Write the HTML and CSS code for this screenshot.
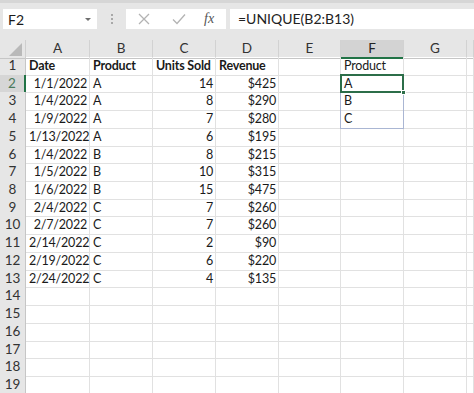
FILE: index.html
```html
<!DOCTYPE html>
<html>
<head>
<meta charset="utf-8">
<link rel="stylesheet" href="styles.css">
</head>
<body>
<div class="app">
  <div class="topstrip"></div>
  <div class="fbar">
    <div class="namebox"><span class="nb-text">F2</span><span class="nb-arrow"></span></div>
    <div class="grip"><i></i><i></i><i></i></div>
    <div class="fbtns">
      <svg class="ic-x" width="12" height="12" viewBox="0 0 12 12"><path d="M1 1L11 11M11 1L1 11" stroke="#b3b3b3" stroke-width="1.3" fill="none"/></svg>
      <svg class="ic-ok" width="14" height="12" viewBox="0 0 14 12"><path d="M1 6.5L5 10.5L13 1.5" stroke="#b3b3b3" stroke-width="1.3" fill="none"/></svg>
      <span class="fx">fx</span>
    </div>
    <div class="finput">=UNIQUE(B2:B13)</div>
  </div>
  <div class="gap"></div>
  <div class="sheet">
    <div class="row hdr">
      <div class="corner"><span class="tri"></span></div>
      <div class="ch">A</div><div class="ch">B</div><div class="ch">C</div><div class="ch">D</div><div class="ch">E</div><div class="ch sel">F</div><div class="ch">G</div><div class="ch last"></div>
    </div>
    <div class="row"><div class="rh">1</div><div class="c b">Date</div><div class="c b">Product</div><div class="c b">Units Sold</div><div class="c b">Revenue</div><div class="c"></div><div class="c">Product</div><div class="c"></div><div class="c"></div></div>
    <div class="row"><div class="rh rsel">2</div><div class="c r">1/1/2022</div><div class="c">A</div><div class="c r">14</div><div class="c r">$425</div><div class="c"></div><div class="c active">A<span class="spill"></span><span class="selbox"><span class="handle"></span></span></div><div class="c"></div><div class="c"></div></div>
    <div class="row"><div class="rh">3</div><div class="c r">1/4/2022</div><div class="c">A</div><div class="c r">8</div><div class="c r">$290</div><div class="c"></div><div class="c">B</div><div class="c"></div><div class="c"></div></div>
    <div class="row"><div class="rh">4</div><div class="c r">1/9/2022</div><div class="c">A</div><div class="c r">7</div><div class="c r">$280</div><div class="c"></div><div class="c">C</div><div class="c"></div><div class="c"></div></div>
    <div class="row"><div class="rh">5</div><div class="c r">1/13/2022</div><div class="c">A</div><div class="c r">6</div><div class="c r">$195</div><div class="c"></div><div class="c"></div><div class="c"></div><div class="c"></div></div>
    <div class="row"><div class="rh">6</div><div class="c r">1/4/2022</div><div class="c">B</div><div class="c r">8</div><div class="c r">$215</div><div class="c"></div><div class="c"></div><div class="c"></div><div class="c"></div></div>
    <div class="row"><div class="rh">7</div><div class="c r">1/5/2022</div><div class="c">B</div><div class="c r">10</div><div class="c r">$315</div><div class="c"></div><div class="c"></div><div class="c"></div><div class="c"></div></div>
    <div class="row"><div class="rh">8</div><div class="c r">1/6/2022</div><div class="c">B</div><div class="c r">15</div><div class="c r">$475</div><div class="c"></div><div class="c"></div><div class="c"></div><div class="c"></div></div>
    <div class="row"><div class="rh">9</div><div class="c r">2/4/2022</div><div class="c">C</div><div class="c r">7</div><div class="c r">$260</div><div class="c"></div><div class="c"></div><div class="c"></div><div class="c"></div></div>
    <div class="row"><div class="rh">10</div><div class="c r">2/7/2022</div><div class="c">C</div><div class="c r">7</div><div class="c r">$260</div><div class="c"></div><div class="c"></div><div class="c"></div><div class="c"></div></div>
    <div class="row"><div class="rh">11</div><div class="c r">2/14/2022</div><div class="c">C</div><div class="c r">2</div><div class="c r">$90</div><div class="c"></div><div class="c"></div><div class="c"></div><div class="c"></div></div>
    <div class="row"><div class="rh">12</div><div class="c r">2/19/2022</div><div class="c">C</div><div class="c r">6</div><div class="c r">$220</div><div class="c"></div><div class="c"></div><div class="c"></div><div class="c"></div></div>
    <div class="row"><div class="rh">13</div><div class="c r">2/24/2022</div><div class="c">C</div><div class="c r">4</div><div class="c r">$135</div><div class="c"></div><div class="c"></div><div class="c"></div><div class="c"></div></div>
    <div class="row"><div class="rh">14</div><div class="c"></div><div class="c"></div><div class="c"></div><div class="c"></div><div class="c"></div><div class="c"></div><div class="c"></div><div class="c"></div></div>
    <div class="row"><div class="rh">15</div><div class="c"></div><div class="c"></div><div class="c"></div><div class="c"></div><div class="c"></div><div class="c"></div><div class="c"></div><div class="c"></div></div>
    <div class="row"><div class="rh">16</div><div class="c"></div><div class="c"></div><div class="c"></div><div class="c"></div><div class="c"></div><div class="c"></div><div class="c"></div><div class="c"></div></div>
    <div class="row"><div class="rh">17</div><div class="c"></div><div class="c"></div><div class="c"></div><div class="c"></div><div class="c"></div><div class="c"></div><div class="c"></div><div class="c"></div></div>
    <div class="row"><div class="rh">18</div><div class="c"></div><div class="c"></div><div class="c"></div><div class="c"></div><div class="c"></div><div class="c"></div><div class="c"></div><div class="c"></div></div>
    <div class="row"><div class="rh">19</div><div class="c"></div><div class="c"></div><div class="c"></div><div class="c"></div><div class="c"></div><div class="c"></div><div class="c"></div><div class="c"></div></div>
  </div>
</div>
</body>
</html>
```
FILE: styles.css
```css
* { box-sizing: border-box; }
html, body { margin: 0; padding: 0; }
body {
  width: 474px; height: 393px; overflow: hidden;
  background: #fff;
  font-family: Lato, "Open Sans", sans-serif;
  color: #1a1a1a;
}
.app { display: flex; flex-direction: column; }
.topstrip { height: 3px; background: #d6d6d6; }
.fbar {
  height: 26px; background: #e6e6e6;
  display: flex; align-items: center; padding: 6px 0 0 3px;
}
.namebox {
  width: 94px; height: 20px; background: #fff;
  display: flex; align-items: center; justify-content: space-between;
  padding: 0 6px 0 5px;
  font-size: 14px;
}
.nb-arrow {
  width: 0; height: 0;
  border-left: 3px solid transparent; border-right: 3px solid transparent;
  border-top: 3px solid #6f6f6f;
}
.grip {
  width: 29px; display: flex; flex-direction: column; align-items: center; gap: 2px;
}
.grip i { width: 2px; height: 2px; background: #a8a8a8; display: block; }
.fbtns {
  width: 100px; height: 20px; background: #fff;
  display: flex; align-items: center; padding-left: 12px;
}
.ic-x { margin-right: 22px; }
.ic-ok { margin-right: 18px; }
.fx {
  font-family: "Liberation Serif", serif; font-style: italic; font-size: 14px; color: #555;
}
.finput {
  flex: 1; height: 20px; margin-left: 4px; background: #fff;
  font-size: 14px; line-height: 20px; padding-left: 8px; color: #222;
}
.gap { height: 11px; background: #e6e6e6; }
.sheet { display: flex; flex-direction: column; }
.row {
  display: grid;
  grid-template-columns: 26px 64px 63px 63px 63px 62px 63px 63px 7px;
  height: 17.72px;
  font-size: 12.5px;
  letter-spacing: -0.2px;
}
.row.hdr { height: 17px; background: #e6e6e6; letter-spacing: 0; }
.corner { position: relative; border-right: 1px solid #cfcfcf; border-bottom: 1px solid #c6c6c6; }
.tri {
  position: absolute; right: 3px; bottom: 2px; width: 0; height: 0;
  border-left: 13px solid transparent; border-bottom: 13px solid #b9b9b9;
}
.ch {
  text-align: center; font-size: 13.5px; line-height: 17px; color: #333;
  border-right: 1px solid #d2d2d2; border-bottom: 1px solid #c6c6c6;
}
.ch.sel { background: #d3d3d3; border-bottom: 2px solid #217346; color: #222; }
.rh {
  background: #e6e6e6; text-align: center; font-size: 13.5px; line-height: 17.72px; color: #333;
  letter-spacing: 0;
  border-right: 1px solid #c6c6c6; border-bottom: 1px solid #d4d4d4;
}
.rh.rsel { background: #d6d6d6; border-right: 2px solid #217346; color: #4a7a5c; }
.c {
  border-right: 1px solid #e1e1e1; border-bottom: 1px solid #e1e1e1;
  line-height: 17px; padding: 0 2px 0 3px; white-space: nowrap; overflow: visible;
}
.c.r { text-align: right; }
.c.b { font-weight: bold; }
.active { position: relative; }
.spill {
  position: absolute; left: -1px; top: -1px; width: 64px; height: 55px;
  border: 1px solid #aab6d3;
}
.selbox {
  position: absolute; left: -1px; top: -1px; width: 64px; height: 19px;
  border: 2px solid #2c6e49;
}
.handle {
  position: absolute; right: -4px; bottom: -4px; width: 5px; height: 5px;
  background: #2c6e49; border: 1px solid #fff;
}
```
